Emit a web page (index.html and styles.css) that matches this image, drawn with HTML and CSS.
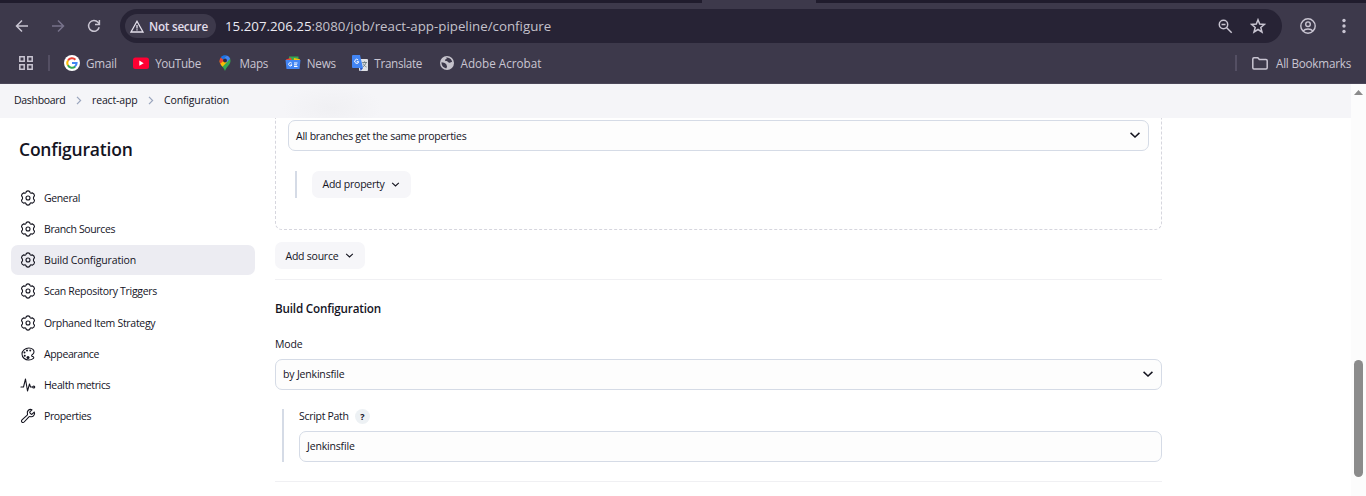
FILE: index.html
```html
<!DOCTYPE html>
<html lang="en">
<head>
<meta charset="utf-8">
<title>Configuration</title>
<link rel="stylesheet" href="styles.css">
</head>
<body>
<svg class="defs" aria-hidden="true">
  <symbol id="gear" viewBox="0 0 16 16"><g fill="none" stroke="currentColor" stroke-width="1.100" stroke-linejoin="round"><circle cx="8" cy="8" r="2"/><path d="M6.300 1.500Q8 .3 9.700 1.500L10 2.500Q10.500 3.300 11.400 3.100L12.600 2.900Q14.400 3.700 14.500 5.700L13.700 6.900Q13.200 8 13.700 9.100L14.500 10.300Q14.400 12.300 12.600 13.100L11.400 12.900Q10.500 12.700 10 13.500L9.700 14.500Q8 15.700 6.300 14.500L6 13.500Q5.500 12.700 4.600 12.900L3.400 13.100Q1.600 12.300 1.500 10.300L2.300 9.100Q2.800 8 2.300 6.900L1.500 5.700Q1.600 3.700 3.400 2.900L4.600 3.100Q5.500 3.300 6 2.500z"/></g></symbol>
  <symbol id="chev" viewBox="0 0 10 10"><path d="M1.300 3.200 5 6.700l3.700-3.500" fill="none" stroke="currentColor" stroke-width="1.250"/></symbol>
  <symbol id="crumb" viewBox="0 0 6 9"><path d="m1 .8 3.600 3.700L1 8.200" fill="none" stroke="currentColor" stroke-width="1.200"/></symbol>
</svg>

<div class="browser">
  <div class="tabstrip"><span class="tab-active"></span></div>
  <div class="toolbar">
    <div class="nav">
      <svg width="14" height="14" viewBox="0 0 14 14"><path d="M13 7H2M7 1.500 1.500 7 7 12.500" fill="none" stroke="currentColor" stroke-width="1.500"/></svg>
      <svg class="dim" width="14" height="14" viewBox="0 0 14 14"><path d="M1 7h11M7 1.500 12.500 7 7 12.500" fill="none" stroke="currentColor" stroke-width="1.500"/></svg>
      <svg width="14" height="14" viewBox="0 0 14 14"><path d="M12.200 8.300A5.400 5.400 0 1 1 11 3.300L12.300 4.900" fill="none" stroke="currentColor" stroke-width="1.500"/><path d="M12.400 1v4.500H8" fill="none" stroke="currentColor" stroke-width="1.500"/></svg>
    </div>
    <div class="omnibox">
      <div class="chip">
        <svg width="14" height="13" viewBox="0 0 14 13"><path d="M7 1.300 13 12H1z" fill="none" stroke="currentColor" stroke-width="1.300"/><path d="M7 5v3.500M7 9.300v1.300" stroke="currentColor" stroke-width="1.300"/></svg>
        <span>Not secure</span>
      </div>
      <span class="url"><span class="host">15.207.206.25</span>:8080/job/react-app-pipeline/configure</span>
      <svg class="magnify" width="15" height="15" viewBox="0 0 15 15"><g fill="none" stroke="currentColor" stroke-width="1.500"><circle cx="5.500" cy="5.500" r="4.200"/><path d="m8.700 8.700 5 5M3.500 5.500h4"/></g></svg>
      <svg class="star" width="16" height="16" viewBox="0 0 16 16"><path d="m8 1.800 1.700 4.300 4.700.3-3.600 3 1.200 4.600L8 11.500 4 14l1.200-4.600-3.600-3 4.700-.3z" fill="none" stroke="currentColor" stroke-width="1.500"/></svg>
    </div>
    <svg class="profile" width="16" height="16" viewBox="0 0 16 16"><g fill="none" stroke="currentColor" stroke-width="1.400"><circle cx="8" cy="8" r="7.200"/><circle cx="8" cy="6.200" r="2.300"/><path d="M3 13c2.500-2.700 7.500-2.700 10 0"/></g></svg>
    <svg class="kebab" width="4" height="16" viewBox="0 0 4 16"><g fill="currentColor"><circle cx="2" cy="2.500" r="1.700"/><circle cx="2" cy="8" r="1.700"/><circle cx="2" cy="13.500" r="1.700"/></g></svg>
  </div>
  <div class="bookmarks">
    <svg class="apps" width="14" height="14" viewBox="0 0 14 14"><path d="M.8.8h4.400v4.400H.8zM8.800.8h4.400v4.400H8.800zM.8 8.800h4.400v4.400H.8zM8.800 8.800h4.400v4.400H8.800z" fill="none" stroke="currentColor" stroke-width="1.500"/></svg>
    <span class="sep"></span>
    <div class="links">
      <a class="bm"><svg width="16" height="16" viewBox="0 0 16 16"><circle cx="8" cy="8" r="8" fill="#fff"/><g fill="none" stroke-width="2"><path d="M11.400 4.700A4.700 4.700 0 0 0 4 5.600" stroke="#ea4335"/><path d="M4 5.500a4.700 4.700 0 0 0 0 5" stroke="#fbbc05"/><path d="M3.900 10.300a4.700 4.700 0 0 0 7.300 1.200" stroke="#34a853"/><path d="M11 11.600A4.700 4.700 0 0 0 12.600 8.100H8" stroke="#4285f4"/></g></svg><span>Gmail</span></a>
      <a class="bm"><svg width="16" height="16" viewBox="0 0 16 16"><rect y="2.500" width="16" height="11.500" rx="2.500" fill="#ff0033"/><path d="m6.300 5.600 4.400 2.600-4.400 2.600z" fill="#fff"/></svg><span class="tight">YouTube</span></a>
      <a class="bm"><svg width="16" height="16" viewBox="-2 0 16 16"><path d="M6 16c-.6-3-3.500-4.700-4.700-7.200L6 5.500l5.200-1.800c1 3-.4 5.300-2.200 7.300C7.500 12.800 6.600 14 6 16z" fill="#34a853"/><path d="M1.300 8.800C.8 7.800.6 6.800.6 5.700l5.900-4.200L8.500 6.500 3.500 11.700C2.600 10.700 1.800 9.800 1.300 8.800z" fill="#fbbc04"/><path d="M.6 5.700c0-1 .3-2 1.200-3.300L5.500 5 1.300 8.800C.8 7.800.6 6.800.6 5.700z" fill="#ea4335"/><path d="M1.800 2.300C3.500.2 6 0 7.700.5L4.500 5z" fill="#1a73e8"/><path d="M7.700.5c1.700.6 2.900 1.700 3.500 3.300L7.500 7.500 5 4z" fill="#4285f4"/><circle cx="6" cy="5.500" r="1.900" fill="#2b2b45"/></svg><span>Maps</span></a>
      <a class="bm"><svg width="16" height="16" viewBox="0 0 16 16"><path d="M4 1.500h9.500V7H4z" fill="#34a853"/><path d="m1 4.500 5-1.700L7.500 7 2 8z" fill="#ea4335"/><path d="m9 3 6 1.300L14 8 8.500 7z" fill="#fbbc04"/><path d="M.5 5h15l-1 9h-13z" fill="#4285f4"/><path d="M6.800 8.300A1.700 1.700 0 1 0 7 9.900H5.500M9 8h3.500M9 9.800h3M9 11.500h3.500" fill="none" stroke="#fff" stroke-width="1"/></svg><span>News</span></a>
      <a class="bm"><svg width="16" height="16" viewBox="0 0 16 16"><rect x="7" y="4" width="9" height="12" rx="1" fill="#dfe1e5"/><path d="M1 0h7l3 13H1a1 1 0 0 1-1-1V1a1 1 0 0 1 1-1z" fill="#4285f4"/><path d="M8 13h3l-2.300 3z" fill="#2a56c6"/><path d="M6.200 5A2 2 0 1 0 6.700 6.700H4.700" fill="none" stroke="#fff" stroke-width="1"/><path d="M10.200 7.500H15M12.600 6.300v1.200M14 7.500c-.5 2-1.800 3.500-3 4.300M11.200 8.500c.6 1.500 1.700 2.800 3.300 3.500" fill="none" stroke="#6b7a80" stroke-width=".9"/></svg><span class="tight">Translate</span></a>
      <a class="bm"><svg width="16" height="14" viewBox="-1 0 16 14"><circle cx="7" cy="7" r="7" fill="#c6c3cc"/><path d="M1.500 6.300c2 .3 3.300.7 4.500 1.700.8.700.3 1.500 1 2 .4.500-.6 1-.3 2.300C4 12.300 1.300 10 1.500 6.300zM5.500 1.800c1 0 1.500.6 1 1.200-.8.700-1.800.3-1.500 1.500.8 1 2 .3 2.800 1.200.7 1 1.800 1.300 2.500.8s1.300-.8 1.900-.3C12 3.800 10 1.500 7 1.400z" fill="#3d394b"/></svg><span class="loose">Adobe Acrobat</span></a>
    </div>
    <span class="sep right"></span>
    <a class="bm all"><svg width="16" height="13" viewBox="0 0 16 13"><path d="M.8 10.700V2Q.8.800 2 .8h3.800l1.600 1.800H14q1.200 0 1.200 1.200v6.900q0 1.200-1.200 1.200H2q-1.200 0-1.200-1.200z" fill="none" stroke="currentColor" stroke-width="1.500"/></svg><span>All Bookmarks</span></a>
  </div>
</div>

<div class="viewport">
  <div class="page">
    <div class="crumbs">
      <span class="first">Dashboard</span><svg><use href="#crumb"/></svg>
      <span>react-app</span><svg><use href="#crumb"/></svg>
      <span>Configuration</span>
    </div>
    <div class="body">
      <aside class="side">
        <h1>Configuration</h1>
        <nav class="tasks">
          <a><svg><use href="#gear"/></svg><span>General</span></a>
          <a><svg><use href="#gear"/></svg><span>Branch Sources</span></a>
          <a class="on"><svg><use href="#gear"/></svg><span>Build Configuration</span></a>
          <a class="long"><svg><use href="#gear"/></svg><span>Scan Repository Triggers</span></a>
          <a class="long"><svg><use href="#gear"/></svg><span>Orphaned Item Strategy</span></a>
          <a><svg viewBox="0 0 512 512"><path d="M430.110 347.900c-6.600-6.100-16.300-7.600-24.600-9-11.500-1.900-15.900-4-22.600-10-14.300-12.700-14.300-31.100 0-43.800l30.300-26.900c46.400-41 46.400-108.200 0-149.200-34.200-30.100-80.100-45-127.800-45-55.700 0-113.900 20.300-158.800 60.100-83.500 73.800-83.500 194.700 0 268.500 41.500 36.700 97.500 55 152.900 55.400h1.700c55.400 0 110-17.900 148.800-52.400 14.400-12.700 12-36.600.1-47.700z" fill="none" stroke="currentColor" stroke-width="34"/><g fill="currentColor"><circle cx="144" cy="208" r="32"/><circle cx="152" cy="311" r="32"/><circle cx="224" cy="144" r="32"/><circle cx="256" cy="367" r="48"/><circle cx="328" cy="144" r="32"/></g></svg><span>Appearance</span></a>
          <a><svg viewBox="0 0 512 512"><g fill="none" stroke="currentColor" stroke-width="34" stroke-linejoin="round" stroke-linecap="round"><path d="M30 320h82l64-256 64 384 64-224 32 96h64"/><circle cx="440" cy="320" r="32"/></g></svg><span>Health metrics</span></a>
          <a><svg viewBox="0 0 512 512"><path d="M393.870 190a32.100 32.100 0 01-45.250 0l-26.570-26.570a32.090 32.090 0 010-45.260L382.190 58a1 1 0 00-.3-1.640c-38.820-16.640-89.150-8.160-121.110 23.570-30.580 30.350-32.320 76-21.120 115.840a31.930 31.930 0 01-9.060 32.080L64 380a48.170 48.170 0 1068 68l153.860-167a31.930 31.930 0 0131.600-9.130c39.540 10.590 84.540 8.600 114.720-21.190 32.490-32 39.500-88.560 23.750-120.930a1 1 0 00-1.600-.260z" fill="none" stroke="currentColor" stroke-width="36"/></svg><span>Properties</span></a>
        </nav>
      </aside>
      <main class="main">
        <div class="source">
          <div class="field"><span>All branches get the same properties</span><svg><use href="#chev"/></svg></div>
          <div class="nested"><button class="btn"><span>Add property</span><svg><use href="#chev"/></svg></button></div>
        </div>
        <button class="btn add"><span>Add source</span><svg><use href="#chev"/></svg></button>
        <section class="build">
          <h2>Build Configuration</h2>
          <label><span class="mode">Mode</span></label>
          <div class="field"><span class="value">by Jenkinsfile</span><svg><use href="#chev"/></svg></div>
          <div class="script">
            <label><span class="caption">Script Path</span><span class="help">?</span></label>
            <div class="field"><span class="value">Jenkinsfile</span></div>
          </div>
        </section>
      </main>
    </div>
  </div>
  <div class="scroll"><span class="up"></span><span class="thumb"></span></div>
</div>
</body>
</html>
```
FILE: styles.css
```css
* { box-sizing: border-box; }
body { margin: 0; width: 1366px; height: 496px; overflow: hidden; font-family: "Open Sans", "Noto Sans", sans-serif; font-size: 10.5px; letter-spacing: -0.26px; color: #14141f; background: #fff; white-space: nowrap; }
.defs { position: absolute; width: 0; height: 0; }
svg { display: block; flex: none; }

/* browser chrome */
.browser { height: 84px; background: #3d394b; color: #c9c5d2; border-bottom: 1px solid #4b4759; }
.tabstrip { height: 3px; background: #201c2d; }
.tab-active { display: block; width: 114px; height: 3px; margin-left: 702px; background: #3d394b; }
.toolbar { height: 46px; display: flex; align-items: center; }
.nav { display: flex; gap: 22px; padding-left: 15px; width: 120px; }
.dim { color: #77728a; }
.omnibox { width: 1162px; height: 34px; border-radius: 17px; background: #272335; display: flex; align-items: center; padding-left: 5px; }
.chip { width: 91px; height: 24px; border-radius: 12px; background: #3d394b; display: flex; align-items: center; gap: 5px; padding-left: 5px; color: #e3dfeb; font-size: 11.7px; font-weight: 600; letter-spacing: -0.25px; }
.chip span, .url { margin-top: -1px; }
.url { margin-left: 9px; font-size: 13.3px; letter-spacing: 0; color: #c4c1cb; }
.host { color: #eceaf2; }
.magnify { margin-left: auto; }
.star { margin: 0 16px 0 17px; }
.profile { margin-left: 18px; }
.kebab { margin-left: 26px; }
.bookmarks { height: 28px; display: flex; align-items: center; font-size: 11.7px; letter-spacing: -0.22px; }
.apps { margin-left: 19px; }
.sep { width: 2px; height: 16px; background: #544f63; margin-left: 15px; }
.links { display: flex; gap: 16.5px; margin-left: 14px; }
.bm { display: flex; align-items: center; gap: 6px; }
.bm span { margin-top: -1px; }
.tight { letter-spacing: -0.33px; }
.loose { letter-spacing: 0; }
.right { margin-left: auto; }
.all { margin: 0 15px; gap: 8px; letter-spacing: -0.22px; }

/* page */
.viewport { height: 412px; display: flex; }
.page { width: 1351px; }
.crumbs { height: 34px; background: radial-gradient(50px 24px at 332px 24px, #f0f0f3, #f5f5f800), #f5f5f8; display: flex; align-items: center; padding: 0 0 3px 14px; font-weight: 500; letter-spacing: -0.15px; }
.crumbs .first { letter-spacing: -0.3px; }
.crumbs svg { width: 6px; height: 9px; margin: 2px 10px 0 10.5px; color: #9aa5bd; }
.body { display: flex; height: 378px; }
.side { width: 275px; padding: 16px 20px 0 11px; }
h1 { margin: 0 0 19px 8px; font-size: 17.5px; font-weight: 550; line-height: 30px; letter-spacing: -0.2px; }
.tasks a { display: flex; align-items: center; height: 30px; margin-bottom: 1.17px; border-radius: 7px; padding-left: 9px; gap: 8px; letter-spacing: -0.37px; }
.tasks .long { letter-spacing: -0.3px; }
.tasks .on { background: #ececf2; font-weight: 500; letter-spacing: -0.14px; }
.tasks svg { width: 16px; height: 16px; }
.main { width: 887px; }
.source { height: 112px; border: 1px dashed #d6d6de; border-top: 0; border-radius: 0 0 7px 7px; padding: 2px 12px; }
.field { height: 31px; border: 1px solid #d5dbe6; border-radius: 7px; background: #fdfdfd; display: flex; align-items: center; justify-content: space-between; padding: 0 7px; }
.field svg { width: 12px; height: 12px; margin-bottom: 1px; }
.nested { margin: 20px 0 0 7px; padding-left: 15px; border-left: 2px solid #d5dbe6; }
.btn { display: flex; align-items: center; gap: 6.5px; height: 27px; border: 0; border-radius: 7px; background: #f6f6f9; font: inherit; letter-spacing: -0.23px; color: inherit; padding: 0 11px 0 10.5px; }
.btn svg { width: 9px; height: 9px; margin-bottom: 1px; }
.nested .btn span { margin-bottom: 2px; }
.add { margin-top: 12px; }
.build { border: solid #f0f0f3; border-width: 1px 0; margin-top: 10px; height: 203px; }
h2 { margin: 19px 0 20px; font-size: 11.7px; font-weight: 600; line-height: 18px; letter-spacing: -0.19px; }
label { display: flex; align-items: center; gap: 6px; line-height: 14px; letter-spacing: -0.3px; }
.mode { letter-spacing: -0.13px; }
.value { letter-spacing: -0.17px; margin-bottom: 2px; }
.caption { margin-bottom: 2px; }
.build > .field { margin-top: 8px; }
.script { margin: 19px 0 0 7px; border-left: 2px solid #d5dbe6; padding-left: 15px; }
.script label { height: 15px; }
.script .field { margin-top: 7px; }
.help { width: 15px; height: 15px; border-radius: 50%; background: #edf1f4; text-align: center; font-size: 9px; font-weight: 700; line-height: 15px; }
.scroll { width: 15px; background: #fcfcfc; padding: 6px 3px 0; }
.up { display: block; width: 9px; height: 5px; background: #8b8b8b; clip-path: polygon(50% 0, 100% 100%, 0 100%); }
.thumb { display: block; width: 9px; height: 117px; margin-top: 265px; border-radius: 5px; background: #8b8b8b; }
```
